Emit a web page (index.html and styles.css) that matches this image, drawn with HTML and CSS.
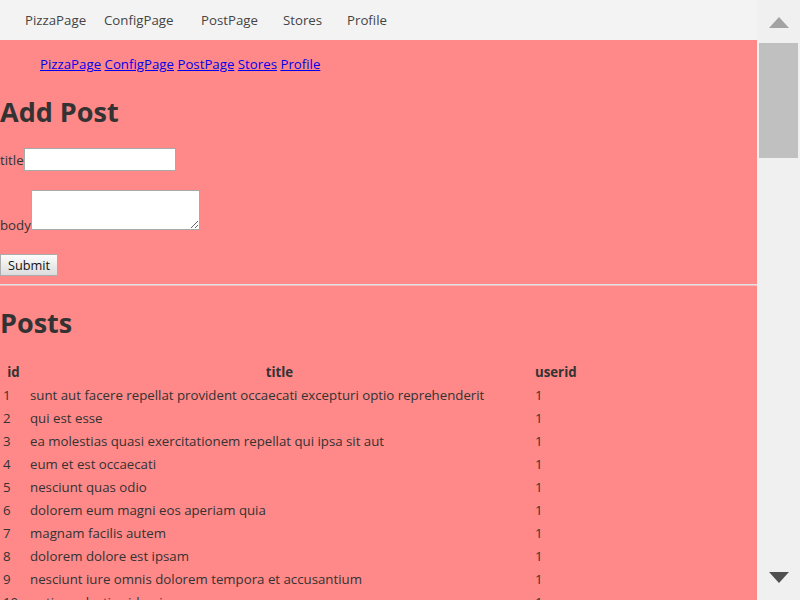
FILE: index.html
```html
<!DOCTYPE html>
<html>
<head>
<meta charset="utf-8">
<link rel="stylesheet" href="styles.css">
</head>
<body>
<div class="window">
  <div class="main">
    <nav class="topnav">
      <span class="nav-item">PizzaPage</span>
      <span class="nav-item">ConfigPage</span>
      <span class="nav-item">PostPage</span>
      <span class="nav-item">Stores</span>
      <span class="nav-item">Profile</span>
    </nav>
    <div class="content">
      <div class="links"><a href="#">PizzaPage</a> <a href="#">ConfigPage</a> <a href="#">PostPage</a> <a href="#">Stores</a> <a href="#">Profile</a></div>
      <h1 class="heading">Add Post</h1>
      <div class="form-row"><label class="lbl">title</label><input class="txt" type="text"></div>
      <div class="form-row form-row-area"><label class="lbl">body</label><textarea class="area"></textarea></div>
      <div class="form-row form-row-btn"><button class="btn">Submit</button></div>
      <hr class="sep">
      <h1 class="heading heading-posts">Posts</h1>
      <table class="posts">
        <thead>
          <tr><th class="c-id">id</th><th class="c-title">title</th><th class="c-user">userid</th></tr>
        </thead>
        <tbody>
          <tr><td>1</td><td>sunt aut facere repellat provident occaecati excepturi optio reprehenderit</td><td>1</td></tr>
          <tr><td>2</td><td>qui est esse</td><td>1</td></tr>
          <tr><td>3</td><td>ea molestias quasi exercitationem repellat qui ipsa sit aut</td><td>1</td></tr>
          <tr><td>4</td><td>eum et est occaecati</td><td>1</td></tr>
          <tr><td>5</td><td>nesciunt quas odio</td><td>1</td></tr>
          <tr><td>6</td><td>dolorem eum magni eos aperiam quia</td><td>1</td></tr>
          <tr><td>7</td><td>magnam facilis autem</td><td>1</td></tr>
          <tr><td>8</td><td>dolorem dolore est ipsam</td><td>1</td></tr>
          <tr><td>9</td><td>nesciunt iure omnis dolorem tempora et accusantium</td><td>1</td></tr>
          <tr><td>10</td><td>optio molestias id quia eum</td><td>1</td></tr>
          <tr><td>11</td><td>et ea vero quia laudantium autem</td><td>2</td></tr>
          <tr><td>12</td><td>in quibusdam tempore odit est dolorem</td><td>2</td></tr>
        </tbody>
      </table>
    </div>
  </div>
  <div class="scrollbar">
    <div class="sb-btn"><span class="arrow-up"></span></div>
    <div class="sb-thumb"></div>
    <div class="sb-track"></div>
    <div class="sb-btn"><span class="arrow-down"></span></div>
  </div>
</div>
</body>
</html>
```
FILE: styles.css
```css
html, body {
  margin: 0;
  padding: 0;
  height: 600px;
  overflow: hidden;
}
body {
  font-family: "Open Sans", "Noto Sans", sans-serif;
  font-size: 13.25px;
  color: #333333;
}
.window {
  display: flex;
  width: 800px;
  height: 600px;
}
.main {
  width: 757px;
  height: 600px;
  display: flex;
  flex-direction: column;
  overflow: hidden;
}
.topnav {
  flex: 0 0 40px;
  height: 40px;
  background: #f3f3f3;
  display: grid;
  grid-template-columns: 79px 97px 82px 64px auto;
  align-items: center;
  padding-left: 25px;
  color: #444444;
  font-size: 13.25px;
}
.nav-item {
  line-height: 40px;
}
.content {
  flex: 1;
  background: #ff8888;
  overflow: hidden;
}
.links {
  margin-top: 15px;
  padding-left: 40px;
  line-height: 19px;
  height: 19px;
}
.links a {
  color: #0000ee;
  text-decoration: underline;
}
.heading {
  margin: 21px 0 0;
  font-size: 27px;
  line-height: 34px;
  font-weight: 700;
  color: #333333;
}
.heading-posts {
  margin-top: 20px;
}
.form-row {
  margin-top: 19px;
  height: 23px;
  display: flex;
  align-items: center;
}
.form-row-area {
  display: block;
  height: auto;
  margin-top: 19px;
  line-height: 18px;
}
.form-row-btn {
  margin-top: 20px;
  height: 22px;
}
.lbl {
  color: #333333;
}
.txt {
  box-sizing: border-box;
  width: 152px;
  height: 23px;
  margin: 0;
  padding: 0 2px;
  border: 1px solid #a9a9a9;
  background: #ffffff;
  font: inherit;
}
.area {
  box-sizing: border-box;
  width: 169px;
  height: 40px;
  margin: 0;
  padding: 2px;
  border: 1px solid #a9a9a9;
  background: #ffffff;
  vertical-align: baseline;
  font: inherit;
}
.btn {
  box-sizing: border-box;
  height: 22px;
  width: 58px;
  margin: 0;
  padding: 0;
  border: 1px solid #adadad;
  background: linear-gradient(#fcfcfc, #dcdcdc);
  font-family: "Open Sans", "Noto Sans", sans-serif;
  font-size: 12.75px;
  color: #111111;
}
.sep {
  margin: 8px 0 0;
  height: 0;
  border: 0;
  border-top: 1px solid #e2e2e2;
  border-bottom: 1px solid #f5b9b9;
}
.posts {
  margin-top: 21px;
  border-collapse: collapse;
  border-spacing: 0;
  table-layout: fixed;
  width: 580px;
}
.posts th,
.posts td {
  box-sizing: border-box;
  padding: 0 3px;
  height: 23px;
  line-height: 23px;
  white-space: nowrap;
  color: #333333;
}
.posts th {
  font-weight: 700;
  text-align: center;
}
.posts td {
  text-align: left;
}
.c-id { width: 27px; }
.c-title { width: 505px; }
.c-user { width: 48px; }
.posts th.c-user { text-align: left; }
.scrollbar {
  width: 43px;
  height: 600px;
  background: #f0f0f0;
  display: flex;
  flex-direction: column;
  align-items: center;
}
.sb-btn {
  flex: 0 0 43px;
  height: 43px;
  width: 43px;
  display: flex;
  align-items: center;
  justify-content: center;
}
.arrow-up {
  width: 0;
  height: 0;
  border-left: 10.5px solid transparent;
  border-right: 10.5px solid transparent;
  border-bottom: 11px solid #a3a3a3;
  margin-top: 2px;
}
.arrow-down {
  width: 0;
  height: 0;
  border-left: 10.5px solid transparent;
  border-right: 10.5px solid transparent;
  border-top: 11px solid #505050;
  margin-top: -2px;
}
.sb-thumb {
  flex: 0 0 115px;
  width: 39px;
  background: #c0c0c0;
}
.sb-track {
  flex: 1;
}
```
